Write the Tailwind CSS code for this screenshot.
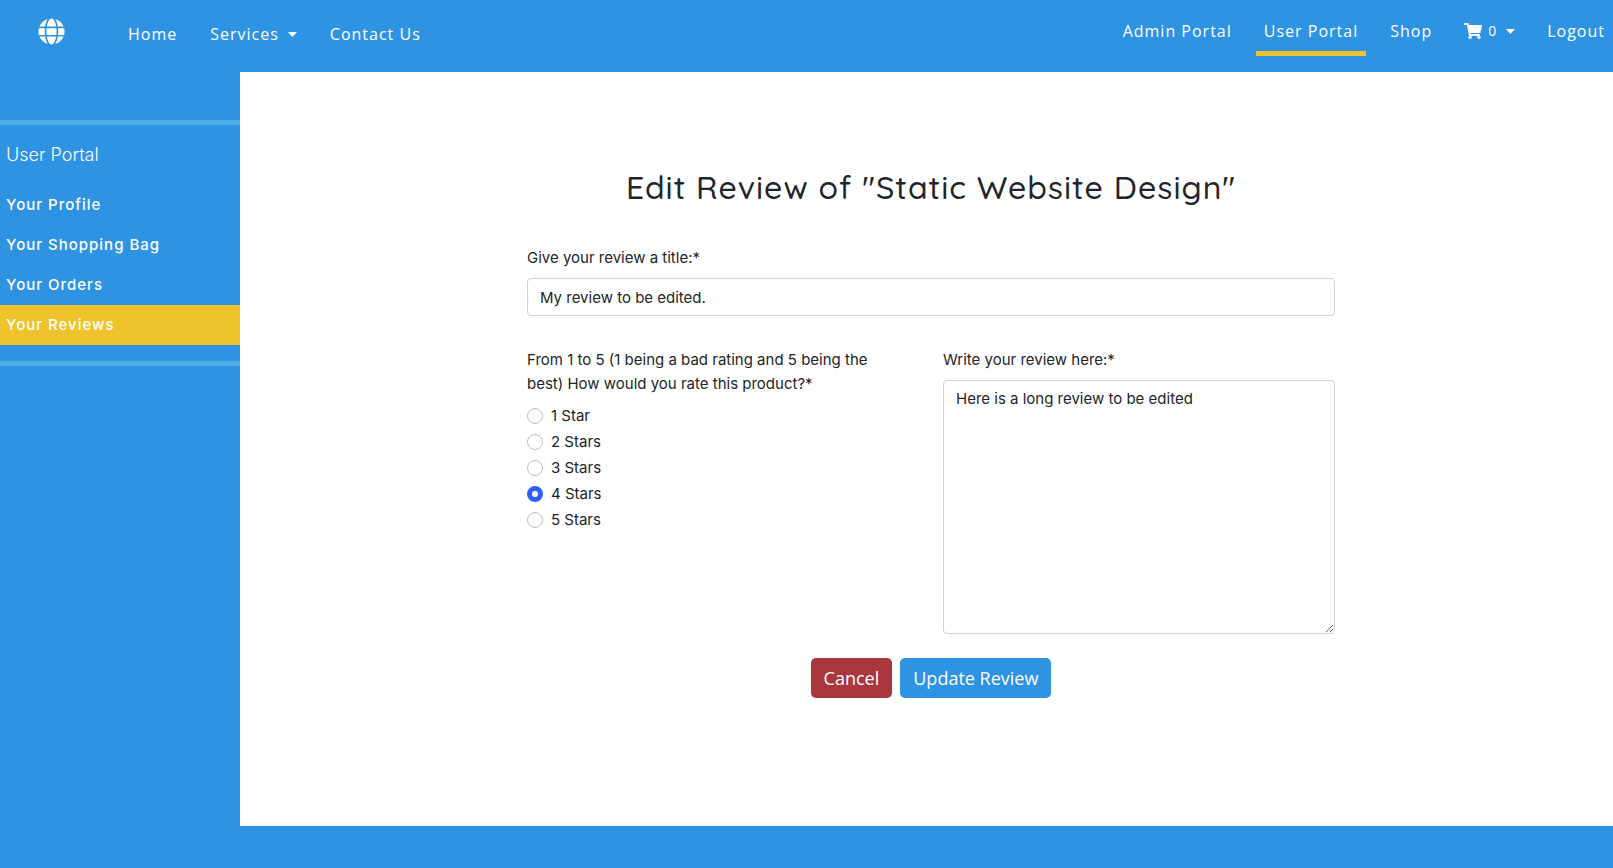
<!DOCTYPE html>
<html lang="en">
<head>
<meta charset="utf-8">
<meta name="viewport" content="width=device-width, initial-scale=1">
<title>Edit Review</title>
<script src="https://cdn.jsdelivr.net/npm/@tailwindcss/browser@4"></script>
</head>
<body class="flex min-h-screen flex-col bg-[#2e93e2] font-['Inter',sans-serif] text-[15px] leading-6 text-[#212529]">
<header class="flex h-18 shrink-0 items-start justify-between font-['Open_Sans',sans-serif] text-base font-medium tracking-[1px] text-white">
  <nav class="flex items-start" aria-label="Main">
    <a href="#" aria-label="Site home" class="mt-[18px] ml-[38px] block">
      <svg class="size-[27px]" viewBox="-8 0 512 512" fill="currentColor" aria-hidden="true"><path d="M336.500 160C322 70.700 287.800 8 248 8s-74 62.700-88.500 152h177zM152 256c0 22.200 1.200 43.500 3.300 64h185.300c2.100-20.500 3.300-41.800 3.300-64s-1.200-43.500-3.300-64H155.300c-2.100 20.500-3.300 41.800-3.300 64zm324.700-96c-28.600-67.900-86.500-120.400-158-141.600 24.400 33.800 41.200 84.700 50 141.600h108zM177.200 18.400C105.800 39.600 47.800 92.100 19.300 160h108c8.700-56.900 25.500-107.800 49.900-141.600zM487.400 192H372.700c2.100 21 3.300 42.500 3.300 64s-1.200 43-3.300 64h114.600c5.500-20.500 8.600-41.800 8.600-64s-3.100-43.500-8.500-64zM120 256c0-21.500 1.200-43 3.300-64H8.600C3.200 212.500 0 233.800 0 256s3.200 43.500 8.600 64h114.600c-2-21-3.200-42.500-3.200-64zm39.500 96c14.500 89.300 48.700 152 88.500 152s74-62.700 88.500-152h-177zm159.300 141.600c71.400-21.200 129.400-73.700 158-141.600h-108c-8.800 56.900-25.600 107.800-50 141.600zM19.300 352c28.600 67.900 86.500 120.400 158 141.600-24.400-33.800-41.200-84.700-50-141.600h-108z"/></svg>
    </a>
    <ul class="mt-[14px] ml-[55px] flex gap-[17px]">
      <li><a href="#" class="block p-2">Home</a></li>
      <li><button type="button" class="flex items-center gap-[9px] p-2 tracking-[1px]">Services
        <svg class="h-[5px] w-[9px]" viewBox="0 0 9 5" fill="currentColor" aria-hidden="true"><path d="M0 0h9L4.500 5z"/></svg></button></li>
      <li><a href="#" class="block p-2">Contact Us</a></li>
    </ul>
  </nav>
  <ul class="mt-[11px] flex gap-4">
    <li><a href="#" class="block p-2">Admin Portal</a></li>
    <li><a href="#" aria-current="page" class="block border-b-5 border-[#eec32b] p-2">User Portal</a></li>
    <li><a href="#" class="block p-2">Shop</a></li>
    <li><button type="button" aria-label="Shopping bag, 0 items" class="flex h-10 items-center p-2 tracking-[1px]">
      <svg class="h-4 w-[18px]" viewBox="0 0 576 512" fill="currentColor" aria-hidden="true"><path d="M528.120 301.319l47.273-208C578.806 78.301 567.391 64 551.990 64H159.208l-9.166-44.810C147.758 8.021 137.930 0 126.529 0H24C10.745 0 0 10.745 0 24v16c0 13.255 10.745 24 24 24h69.883l70.248 343.435C147.325 417.100 136 435.222 136 456c0 30.928 25.072 56 56 56s56-25.072 56-56c0-15.674-6.447-29.835-16.824-40h209.647C430.447 426.165 424 440.326 424 456c0 30.928 25.072 56 56 56s56-25.072 56-56c0-22.172-12.888-41.332-31.579-50.405l5.517-24.276c3.413-15.018-8.002-29.319-23.403-29.319H218.117l-6.545-32h293.145c11.206 0 20.920-7.754 23.403-18.681z"/></svg>
      <span class="mr-[9px] ml-1.5 text-sm">0</span>
      <svg class="h-[5px] w-[9px]" viewBox="0 0 9 5" fill="currentColor" aria-hidden="true"><path d="M0 0h9L4.500 5z"/></svg></button></li>
    <li><a href="#" class="block p-2">Logout</a></li>
  </ul>
</header>
<div class="flex flex-1">
  <aside class="w-60 shrink-0 pt-12 text-white">
    <div class="border-y-5 border-[#4dabe6] pt-4 pb-4">
      <h2 class="mb-4 px-1.5 text-lg leading-7 font-light">User Portal</h2>
      <ul class="font-medium tracking-[1px]">
        <li><a href="#" class="block px-1.5 py-2">Your Profile</a></li>
        <li><a href="#" class="block px-1.5 py-2">Your Shopping Bag</a></li>
        <li><a href="#" class="block px-1.5 py-2">Your Orders</a></li>
        <li><a href="#" aria-current="page" class="block bg-[#eec32b] px-1.5 py-2">Your Reviews</a></li>
      </ul>
    </div>
  </aside>
  <main class="flex-1 bg-white pt-24 pb-32 pl-[9px]">
    <form class="mx-auto w-full max-w-[808px]">
      <h1 class="mb-10 text-center font-['Quicksand','Lato',sans-serif] text-[32px] leading-[38px] font-medium tracking-[1px]">Edit Review of "Static Website Design"</h1>
      <label for="title" class="mb-2 block">Give your review a title:*</label>
      <input id="title" type="text" value="My review to be edited." class="mb-8 block h-[38px] w-full rounded border border-[#ced4da] px-3">
      <div class="grid grid-cols-2 gap-6">
        <fieldset class="pr-6">
          <legend class="mb-1">From 1 to 5 (1 being a bad rating and 5 being the best) How would you rate this product?*</legend>
          <div class="flex flex-col gap-0.5 pt-1">
            <label class="flex items-center gap-2"><input type="radio" name="rating" value="1" class="size-4 appearance-none rounded-full border border-[#bfbfbf] checked:border-5 checked:border-[#2f60fb]">1 Star</label>
            <label class="flex items-center gap-2"><input type="radio" name="rating" value="2" class="size-4 appearance-none rounded-full border border-[#bfbfbf] checked:border-5 checked:border-[#2f60fb]">2 Stars</label>
            <label class="flex items-center gap-2"><input type="radio" name="rating" value="3" class="size-4 appearance-none rounded-full border border-[#bfbfbf] checked:border-5 checked:border-[#2f60fb]">3 Stars</label>
            <label class="flex items-center gap-2"><input type="radio" name="rating" value="4" checked class="size-4 appearance-none rounded-full border border-[#bfbfbf] checked:border-5 checked:border-[#2f60fb]">4 Stars</label>
            <label class="flex items-center gap-2"><input type="radio" name="rating" value="5" class="size-4 appearance-none rounded-full border border-[#bfbfbf] checked:border-5 checked:border-[#2f60fb]">5 Stars</label>
          </div>
        </fieldset>
        <div>
          <label for="review" class="mb-2 block">Write your review here:*</label>
          <textarea id="review" rows="10" class="block w-full rounded border border-[#ced4da] px-3 py-1.5">Here is a long review to be edited</textarea>
        </div>
      </div>
      <div class="mt-6 flex justify-center gap-2 font-['Open_Sans',sans-serif] text-lg font-medium text-white">
        <button type="button" class="h-10 rounded-[5px] bg-[#ab373e] px-[13px]">Cancel</button>
        <button type="submit" class="h-10 rounded-[5px] bg-[#2e93e2] px-[13px]">Update Review</button>
      </div>
    </form>
  </main>
</div>
<footer class="h-[42px] shrink-0"></footer>
</body>
</html>
